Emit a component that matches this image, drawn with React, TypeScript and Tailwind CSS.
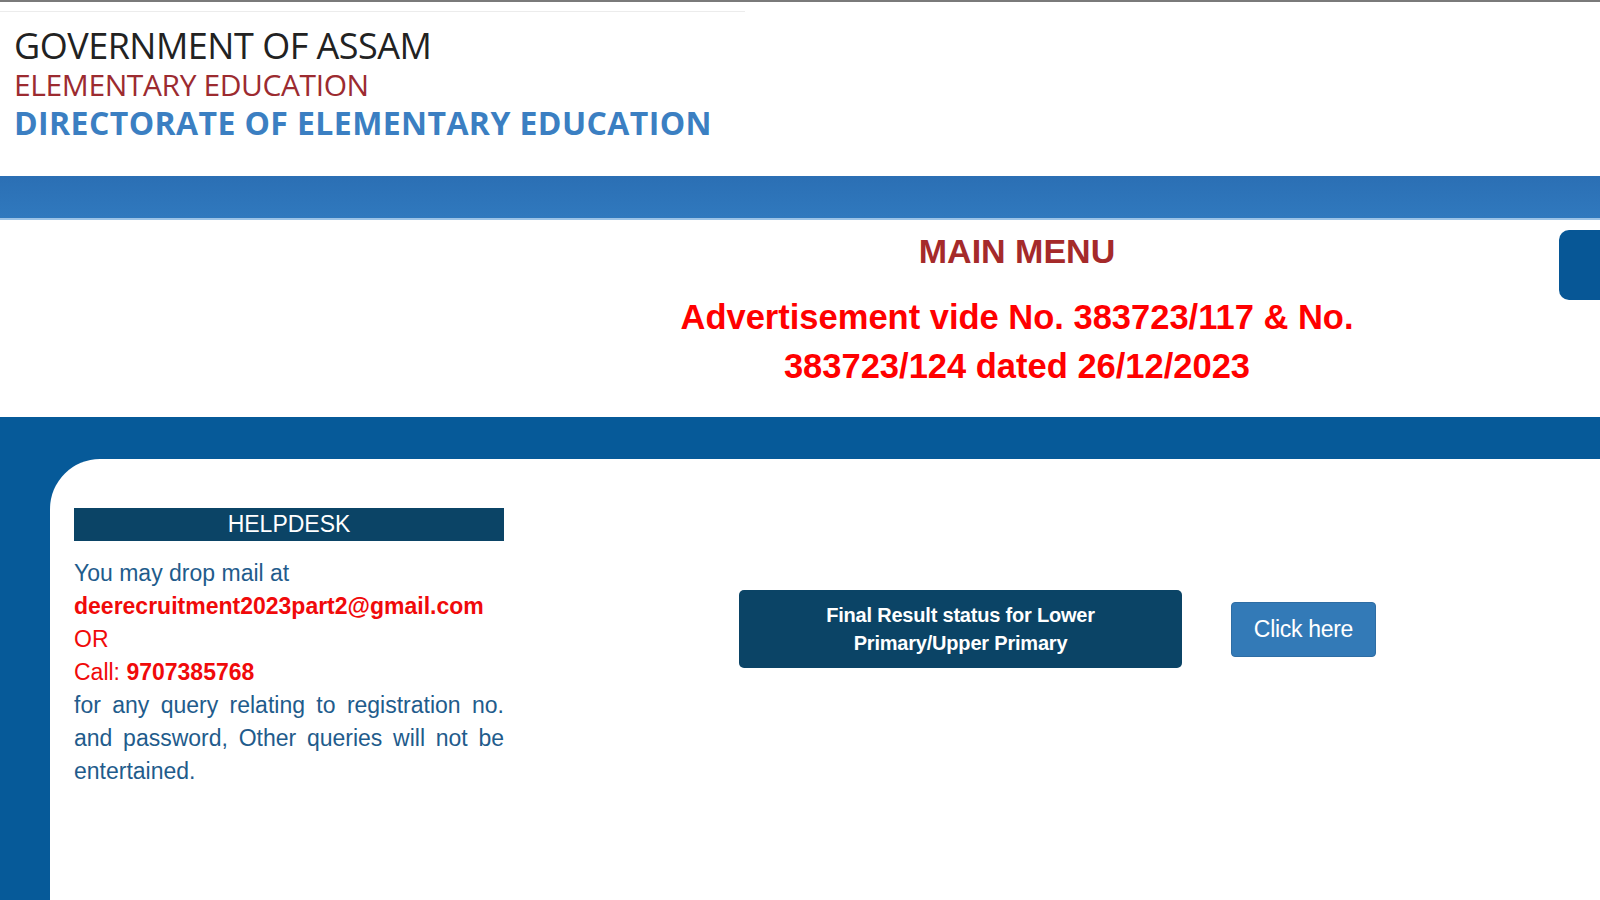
import React from 'react';

const App: React.FC = () => {
  return (
    <div className="w-[1600px] h-[900px] overflow-hidden bg-white" style={{ fontFamily: '"Liberation Sans", Arial, sans-serif' }}>
      {/* header */}
      <div className="h-[176px] border-t-2 border-[#7a7a7a] relative">
        <div className="h-[10px] w-[745px] border-b border-[#ececec]" />
        <div className="pl-[14px] pt-[14px]" style={{ fontFamily: '"Open Sans", sans-serif' }}>
          <div className="text-[36px] leading-[40px] text-[#222] tracking-[-0.5px]">GOVERNMENT OF ASSAM</div>
          <div className="text-[30px] leading-[38px] text-[#9c2b30] tracking-[-0.4px]">ELEMENTARY EDUCATION</div>
          <div className="text-[32px] leading-[38px] font-bold text-[#3b7fc2] tracking-[0.4px]">DIRECTORATE OF ELEMENTARY EDUCATION</div>
        </div>
      </div>

      {/* blue bar */}
      <div className="h-[44px] bg-gradient-to-b from-[#2b6fb4] to-[#3079be] border-b-2 border-[#9cc3e6]" />

      {/* main menu */}
      <div className="relative h-[197px]">
        <div className="absolute right-0 top-[10px] w-[41px] h-[70px] bg-[#075796] rounded-l-[10px]" />
        <div className="pl-[434px] text-center">
          <div className="pt-[11px] text-[34px] leading-[40px] font-bold text-[#a52a2a]">MAIN MENU</div>
          <div className="mt-[22px] text-[34.5px] leading-[49px] font-bold text-[#ff0000]">
            Advertisement vide No. 383723/117 &amp; No.
            <br />
            383723/124 dated 26/12/2023
          </div>
        </div>
      </div>

      {/* content */}
      <div className="h-[486px] bg-[#065a99] pt-[42px] pl-[50px]">
        <div className="h-full bg-white rounded-tl-[50px] flex pl-[24px] pt-[49px]">
          <div className="w-[430px]">
            <div className="h-[33px] bg-[#0b4466] text-white text-[23px] leading-[33px] text-center">HELPDESK</div>
            <div className="mt-[16px] text-[23px] leading-[33px] text-[#1f5c8c]">
              <div>You may drop mail at</div>
              <div className="font-bold text-[#f00a0a]">deerecruitment2023part2@gmail.com</div>
              <div className="text-[#f00a0a]">OR</div>
              <div className="text-[#f00a0a]">
                Call: <span className="font-bold">9707385768</span>
              </div>
              <div className="text-justify">
                for any query relating to registration no. and password, Other queries will not be entertained.
              </div>
            </div>
          </div>
          <div className="ml-[235px] mt-[82px] flex items-center h-[78px]">
            <div className="w-[443px] h-[78px] bg-[#0b4466] rounded-[5px] flex items-center justify-center text-center text-white font-bold text-[20px] leading-[28px] tracking-[-0.2px]">
              Final Result status for Lower
              <br />
              Primary/Upper Primary
            </div>
            <div className="ml-[49px] w-[145px] h-[55px] bg-[#337ab7] rounded-[4px] border border-[#2e6da4] flex items-center justify-center text-white text-[23px] tracking-[-0.3px]">
              Click here
            </div>
          </div>
        </div>
      </div>
    </div>
  );
};

export default App;
